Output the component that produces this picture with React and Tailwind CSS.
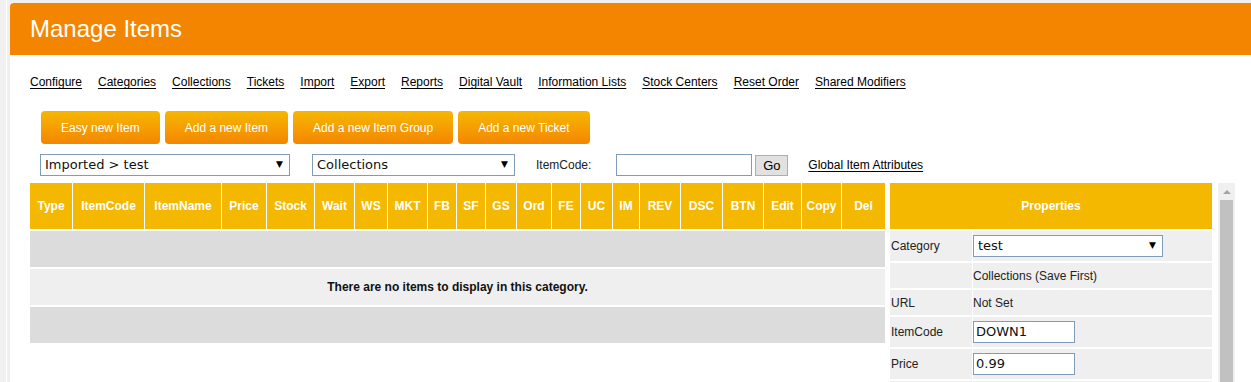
const navLinks = [
  'Configure',
  'Categories',
  'Collections',
  'Tickets',
  'Import',
  'Export',
  'Reports',
  'Digital Vault',
  'Information Lists',
  'Stock Centers',
  'Reset Order',
  'Shared Modifiers',
];

const buttons = ['Easy new Item', 'Add a new Item', 'Add a new Item Group', 'Add a new Ticket'];

const columns = [
  ['Type', 'w-[43px]'],
  ['ItemCode', 'w-[72px]'],
  ['ItemName', 'w-[77px]'],
  ['Price', 'w-[45px]'],
  ['Stock', 'w-[48px]'],
  ['Wait', 'w-[40px]'],
  ['WS', 'w-[33px]'],
  ['MKT', 'w-[40px]'],
  ['FB', 'w-[29px]'],
  ['SF', 'w-[29px]'],
  ['GS', 'w-[31px]'],
  ['Ord', 'w-[35px]'],
  ['FE', 'w-[29px]'],
  ['UC', 'w-[32px]'],
  ['IM', 'w-[27px]'],
  ['REV', 'w-[41px]'],
  ['DSC', 'w-[42px]'],
  ['BTN', 'w-[41px]'],
  ['Edit', 'w-[38px]'],
  ['Copy', 'w-[40px]'],
  ['Del', 'w-[43px]'],
];

const FakeSelect = ({ value, className }) => (
  <div
    className={`flex items-center justify-between bg-white border border-[#7f9db9] pl-[4px] pr-[6px] text-[13px] text-[#111] font-['DejaVu_Sans',sans-serif] ${className}`}
  >
    <span>{value}</span>
    <span className="text-[9px] text-black">▼</span>
  </div>
);

const PropRow = ({ label, h, children }) => (
  <div className={`flex mt-[2px] ${h}`}>
    <div className="w-[82px] bg-[#efefef] flex items-center pl-[1px] text-[#222]">{label}</div>
    <div className="w-[1px] bg-white" />
    <div className="flex-1 bg-[#efefef] flex items-center">{children}</div>
  </div>
);

export default function App() {
  return (
    <div className="w-[1251px] h-[382px] overflow-hidden bg-[#f0f0f0] flex font-['Liberation_Sans',Arial,sans-serif] text-[12px]">
      <div className="w-[10px] flex pl-[6px]">
        <div className="w-[1px] bg-white" />
      </div>
      <div className="flex-1 mt-[3px] bg-white rounded-tl-[4px] overflow-hidden">
        <div className="h-[52px] bg-[#f38500] flex items-center pl-[20px]">
          <h1 className="text-white text-[24px]">Manage Items</h1>
        </div>

        <div className="flex gap-[16px] pl-[20px] mt-[19px] leading-[16px] text-black">
          {navLinks.map((l) => (
            <a key={l} href="#" className="underline underline-offset-[2px]">
              {l}
            </a>
          ))}
        </div>

        <div className="flex gap-[5px] ml-[31px] mt-[21px]">
          {buttons.map((b) => (
            <button
              key={b}
              className="h-[33px] px-[20px] rounded-[4px] bg-linear-to-b from-[#f6b700] to-[#f38600] text-white text-[12px]"
            >
              {b}
            </button>
          ))}
        </div>

        <div className="flex items-center ml-[30px] mt-[10px] h-[22px]">
          <FakeSelect value="Imported > test" className="w-[250px] h-[22px]" />
          <FakeSelect value="Collections" className="w-[203px] h-[22px] ml-[22px]" />
          <span className="ml-[21px] text-[#222]">ItemCode:</span>
          <div className="ml-[25px] w-[136px] h-[22px] border border-[#7f9db9] bg-white" />
          <button className="ml-[3px] w-[33px] h-[21px] border border-[#adadad] bg-[#e1e1e1] text-[13px] text-black">
            Go
          </button>
          <a href="#" className="ml-[20px] underline underline-offset-[2px] text-black">
            Global Item Attributes
          </a>
        </div>

        <div className="flex ml-[20px] mt-[7px]">
          <div className="w-[855px]">
            <div className="flex h-[46px] bg-[#f5b800]">
              {columns.map(([c, w], i) => (
                <div
                  key={c}
                  className={`${w} flex items-center justify-center text-white font-bold ${
                    i < columns.length - 1 ? 'border-r border-white' : ''
                  }`}
                >
                  {c}
                </div>
              ))}
            </div>
            <div className="h-[36px] mt-[2px] bg-[#dcdcdc]" />
            <div className="h-[36px] mt-[2px] bg-[#efefef] flex items-center justify-center font-bold text-[#111]">
              There are no items to display in this category.
            </div>
            <div className="h-[36px] mt-[2px] bg-[#dcdcdc]" />
          </div>

          <div className="w-[322px] ml-[5px]">
            <div className="h-[46px] bg-[#f5b800] flex items-center justify-center text-white font-bold">
              Properties
            </div>
            <PropRow label="Category" h="h-[30px]">
              <FakeSelect value="test" className="w-[190px] h-[22px]" />
            </PropRow>
            <PropRow label="" h="h-[25px]">
              <span className="text-[#222]">Collections (Save First)</span>
            </PropRow>
            <PropRow label="URL" h="h-[25px]">
              <span className="text-[#222]">Not Set</span>
            </PropRow>
            <PropRow label="ItemCode" h="h-[30px]">
              <div className="w-[102px] h-[22px] border border-[#7f9db9] bg-white pl-[2px] flex items-center text-[13px] font-['DejaVu_Sans',sans-serif] text-[#111]">
                DOWN1
              </div>
            </PropRow>
            <PropRow label="Price" h="h-[30px]">
              <div className="w-[102px] h-[22px] border border-[#7f9db9] bg-white pl-[2px] flex items-center text-[13px] font-['DejaVu_Sans',sans-serif] text-[#111]">
                0.99
              </div>
            </PropRow>
            <PropRow label="" h="h-[30px]" />
          </div>

          <div className="w-[17px] ml-[6px] bg-[#f0f0f0] flex flex-col items-center">
            <div className="h-[17px] flex items-center justify-center">
              <div className="w-0 h-0 border-l-[4px] border-r-[4px] border-b-[4px] border-l-transparent border-r-transparent border-b-[#a3a3a3]" />
            </div>
            <div className="w-[13px] h-[300px] bg-[#c1c1c1]" />
          </div>
        </div>
      </div>
    </div>
  );
}
